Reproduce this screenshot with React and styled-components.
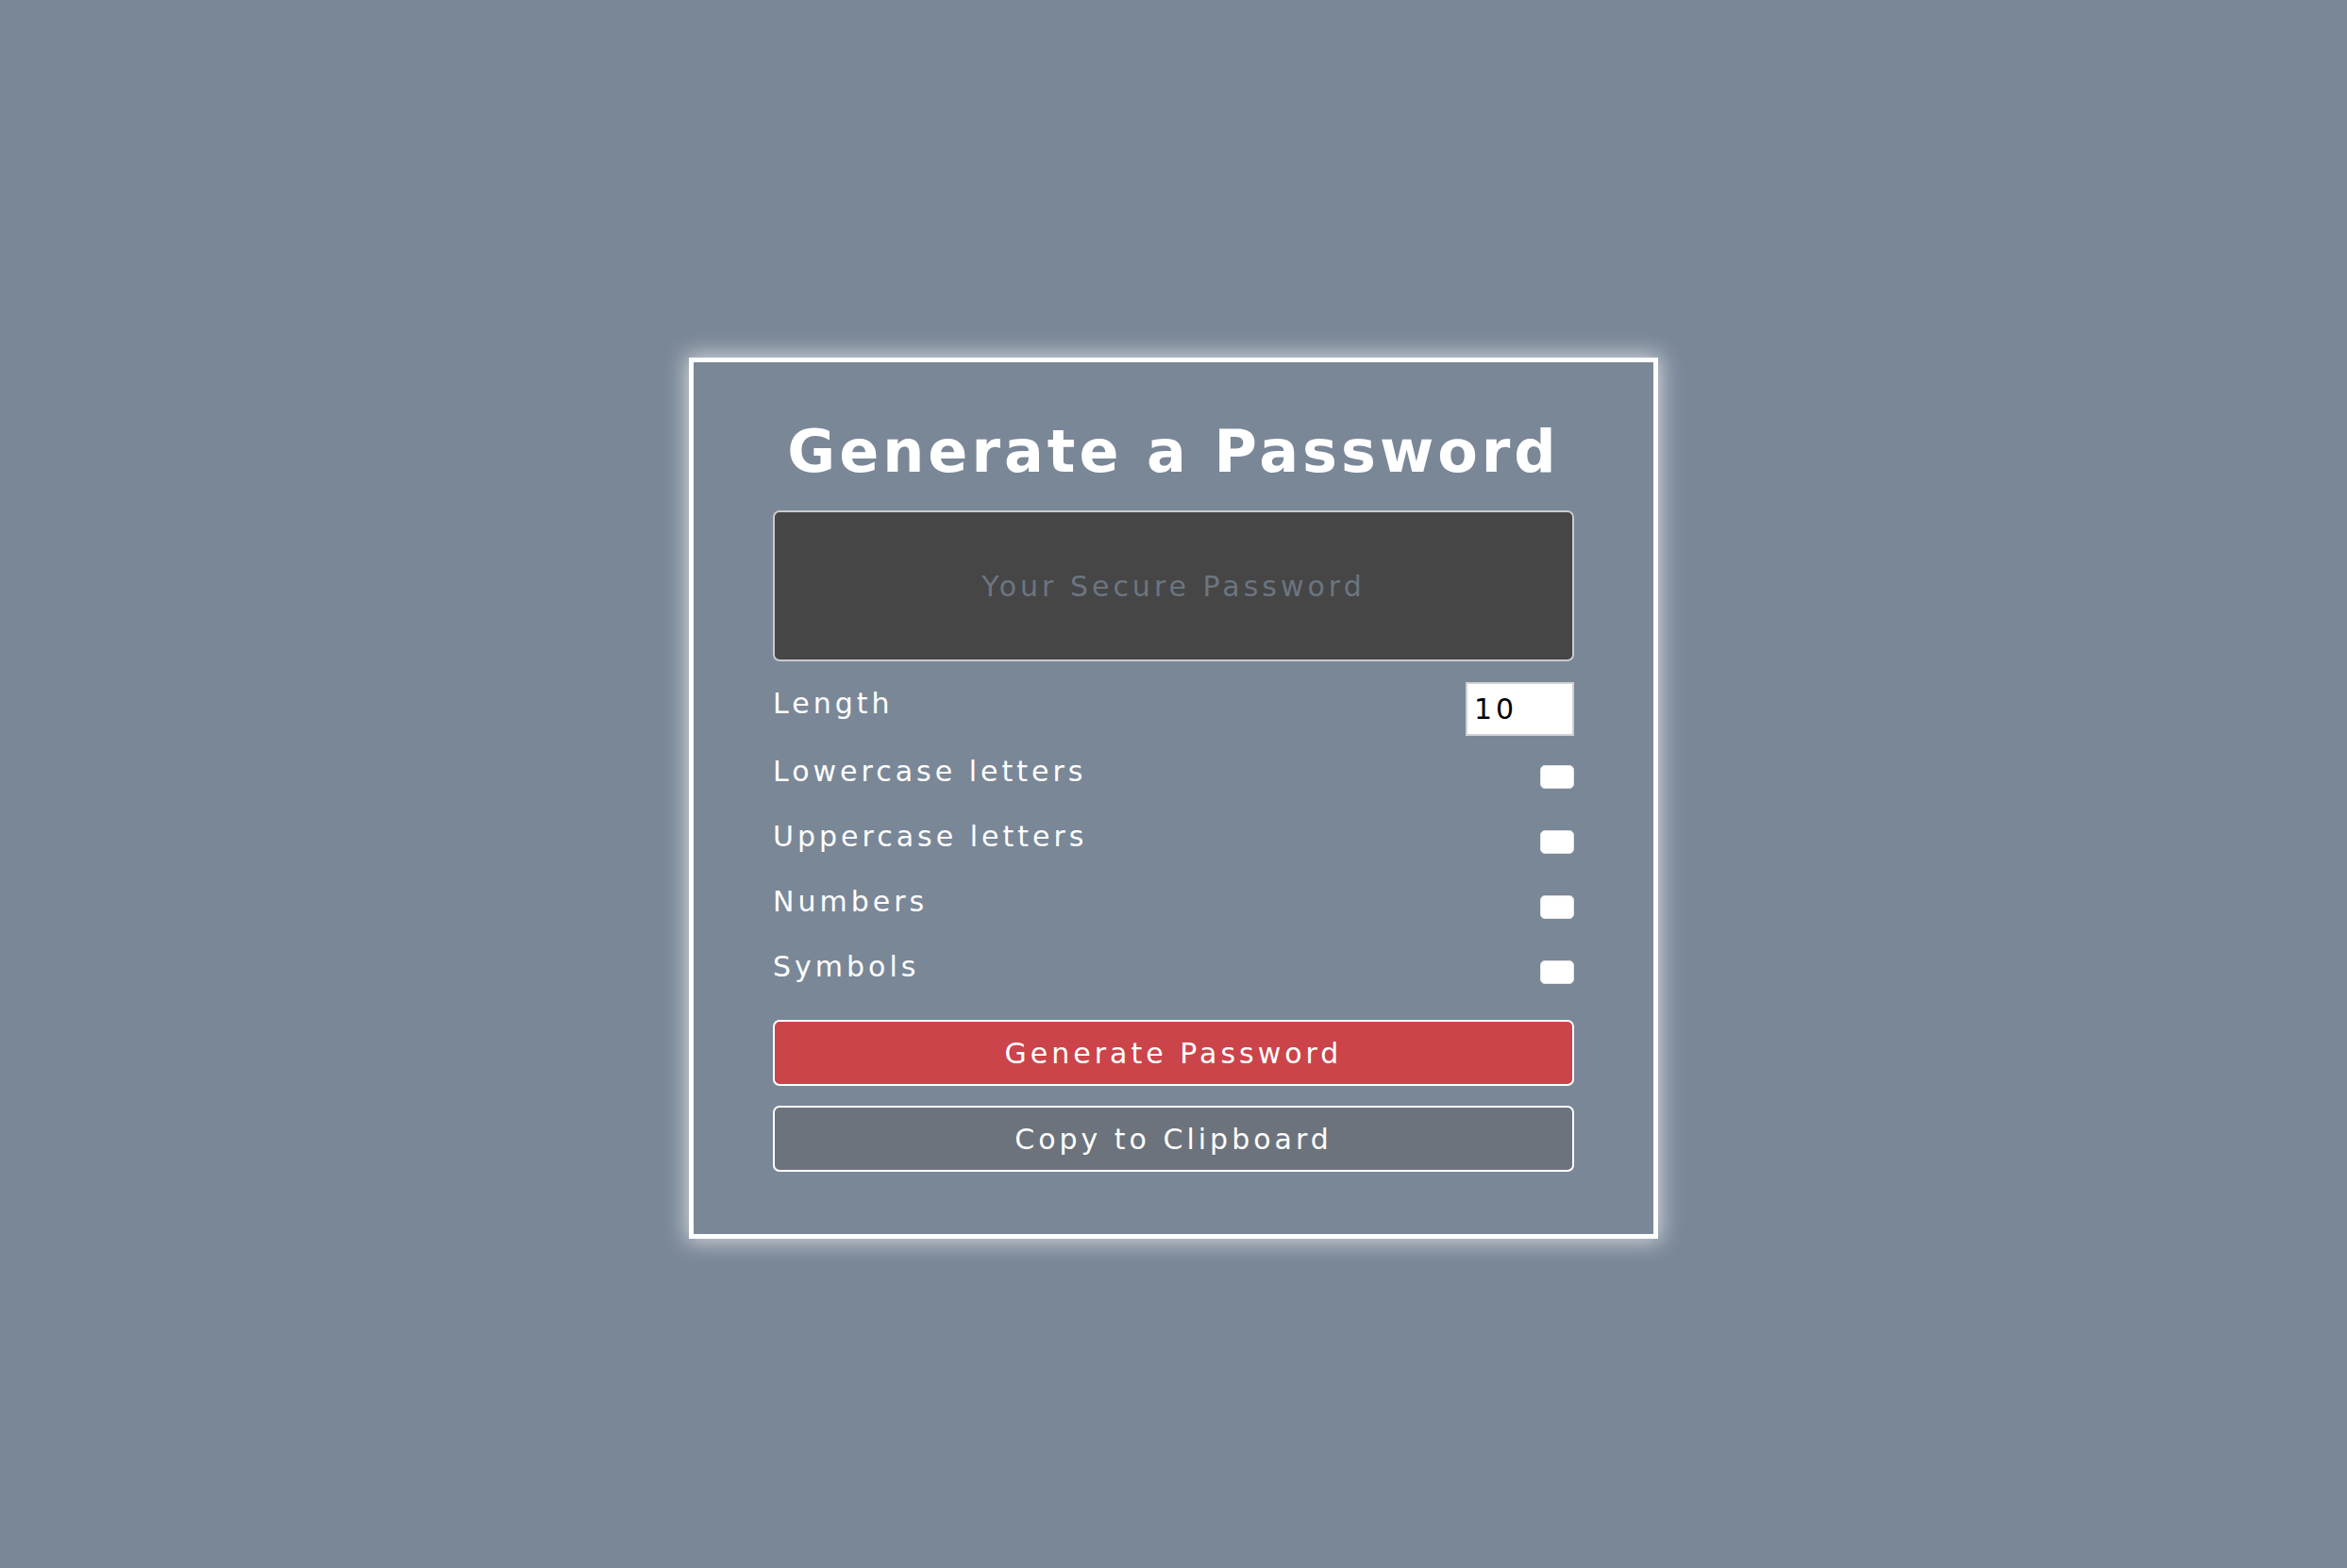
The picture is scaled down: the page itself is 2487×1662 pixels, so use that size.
import React, { useState } from "react";
import styled, { createGlobalStyle } from "styled-components";

const GlobalStyle = createGlobalStyle`
  html, body {
    margin: 0;
    padding: 0;
    background: #7a8797;
  }
  * { box-sizing: border-box; }
`;

const Page = styled.div`
  min-height: 1662px;
  padding-top: 30px;
  display: flex;
  align-items: center;
  justify-content: center;
  background: #7a8797;
  font-family: "DejaVu Sans", "Liberation Sans", sans-serif;
`;

const Card = styled.div`
  width: 1027px;
  border: 5px solid #ffffff;
  box-shadow: 0 0 22px 3px rgba(255, 255, 255, 0.65);
  padding: 59px 84px 66px 84px;
  display: flex;
  flex-direction: column;
`;

const Title = styled.h1`
  margin: 0 0 26px 0;
  font-size: 62px;
  line-height: 72px;
  font-weight: 700;
  letter-spacing: 4px;
  color: #ffffff;
  text-align: center;
`;

const Display = styled.div`
  height: 160px;
  background: #464646;
  border: 2px solid #c9cbce;
  border-radius: 7px;
  display: flex;
  align-items: center;
  justify-content: center;
  font-size: 30px;
  letter-spacing: 4px;
  color: ${(p) => (p.$empty ? "#6c7580" : "#ffffff")};
`;

const Options = styled.div`
  margin-top: 22px;
  display: flex;
  flex-direction: column;
`;

const Row = styled.label`
  display: flex;
  justify-content: space-between;
  align-items: flex-start;
  height: ${(p) => p.$height}px;
`;

const Label = styled.span`
  font-size: 30px;
  line-height: 36px;
  letter-spacing: 4px;
  color: #ffffff;
  margin-top: ${(p) => p.$offset || 0}px;
`;

const NumberInput = styled.input`
  width: 115px;
  height: 57px;
  border: 2px solid #cfd1d4;
  background: #ffffff;
  padding: 0 0 0 7px;
  font-family: "DejaVu Sans", "Liberation Sans", sans-serif;
  font-size: 30px;
  letter-spacing: 4px;
  color: #000000;
  outline: none;
  -moz-appearance: textfield;
  &::-webkit-outer-spin-button,
  &::-webkit-inner-spin-button {
    -webkit-appearance: none;
    margin: 0;
  }
`;

const Check = styled.input`
  appearance: none;
  -webkit-appearance: none;
  width: 36px;
  height: 25px;
  margin: 11px 0 0 0;
  background: #ffffff;
  border: 1px solid #e4e6e8;
  border-radius: 5px;
  cursor: pointer;
  &:checked {
    background: #0d6efd;
    border-color: #0d6efd;
  }
`;

const Button = styled.button`
  height: 70px;
  margin-top: ${(p) => p.$gap}px;
  border: 2px solid #ffffff;
  border-radius: 7px;
  background: ${(p) => p.$bg};
  color: #ffffff;
  font-family: "DejaVu Sans", "Liberation Sans", sans-serif;
  font-size: 30px;
  letter-spacing: 4px;
  cursor: pointer;
`;

const options = [
  { key: "lower", label: "Lowercase letters" },
  { key: "upper", label: "Uppercase letters" },
  { key: "numbers", label: "Numbers" },
  { key: "symbols", label: "Symbols" },
];

export default function App() {
  const [length, setLength] = useState(10);
  const [flags, setFlags] = useState({ lower: false, upper: false, numbers: false, symbols: false });
  const [password, setPassword] = useState("");

  const generate = () => {
    let chars = "";
    if (flags.lower) chars += "abcdefghijklmnopqrstuvwxyz";
    if (flags.upper) chars += "ABCDEFGHIJKLMNOPQRSTUVWXYZ";
    if (flags.numbers) chars += "0123456789";
    if (flags.symbols) chars += "!@#$%^&*()_+-=[]{}";
    if (!chars) return;
    let out = "";
    for (let i = 0; i < Number(length); i++) out += chars[Math.floor(Math.random() * chars.length)];
    setPassword(out);
  };

  return (
    <>
      <GlobalStyle />
      <Page>
        <Card>
          <Title>Generate a Password</Title>
          <Display $empty={!password}>{password || "Your Secure Password"}</Display>
          <Options>
            <Row $height={77}>
              <Label $offset={5}>Length</Label>
              <NumberInput
                type="number"
                value={length}
                onChange={(e) => setLength(e.target.value)}
              />
            </Row>
            {options.map((o) => (
              <Row key={o.key} $height={69}>
                <Label>{o.label}</Label>
                <Check
                  type="checkbox"
                  checked={flags[o.key]}
                  onChange={() => setFlags({ ...flags, [o.key]: !flags[o.key] })}
                />
              </Row>
            ))}
          </Options>
          <Button $bg="#cb444a" $gap={5} onClick={generate}>
            Generate Password
          </Button>
          <Button $bg="#6c737c" $gap={21}>
            Copy to Clipboard
          </Button>
        </Card>
      </Page>
    </>
  );
}
